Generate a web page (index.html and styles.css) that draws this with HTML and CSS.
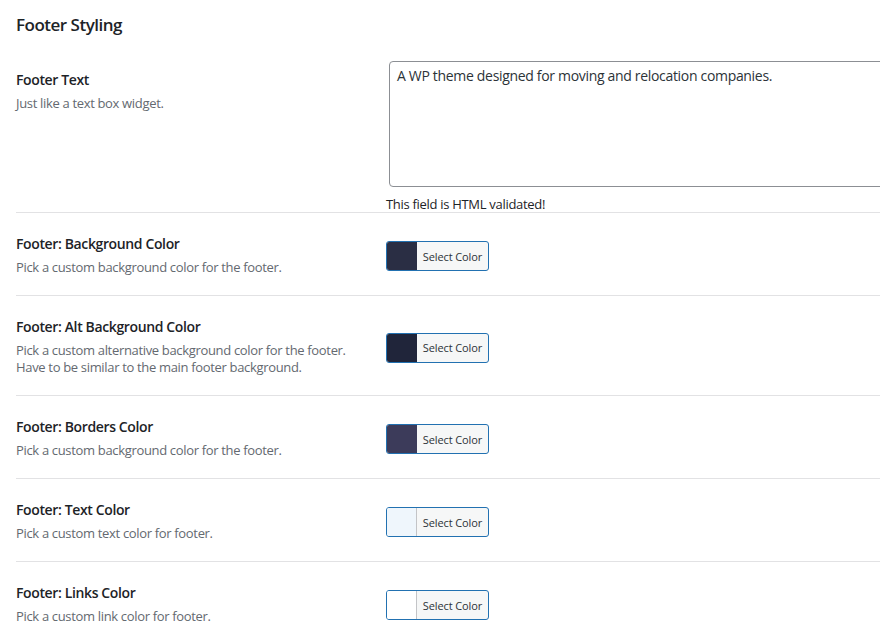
FILE: index.html
```html
<!DOCTYPE html>
<html lang="en">
<head>
<meta charset="utf-8">
<title>Footer Styling</title>
<link rel="stylesheet" href="styles.css">
</head>
<body>
<div class="wrap">
  <h2 class="section-title">Footer Styling</h2>

  <div class="row row-text">
    <div class="label">
      <div class="title">Footer Text</div>
      <div class="desc">Just like a text box widget.</div>
    </div>
    <div class="control control-text">
      <textarea class="textarea">A WP theme designed for moving and relocation companies.</textarea>
      <div class="note">This field is HTML validated!</div>
    </div>
  </div>

  <div class="row">
    <div class="label">
      <div class="title">Footer: Background Color</div>
      <div class="desc">Pick a custom background color for the footer.</div>
    </div>
    <div class="control">
      <button class="color-btn" type="button"><span class="swatch sw-bg"></span><span class="btn-text">Select Color</span></button>
    </div>
  </div>

  <div class="row">
    <div class="label">
      <div class="title">Footer: Alt Background Color</div>
      <div class="desc">Pick a custom alternative background color for the footer.<br>Have to be similar to the main footer background.</div>
    </div>
    <div class="control">
      <button class="color-btn" type="button"><span class="swatch sw-alt"></span><span class="btn-text">Select Color</span></button>
    </div>
  </div>

  <div class="row">
    <div class="label">
      <div class="title">Footer: Borders Color</div>
      <div class="desc">Pick a custom background color for the footer.</div>
    </div>
    <div class="control">
      <button class="color-btn" type="button"><span class="swatch sw-border"></span><span class="btn-text">Select Color</span></button>
    </div>
  </div>

  <div class="row">
    <div class="label">
      <div class="title">Footer: Text Color</div>
      <div class="desc">Pick a custom text color for footer.</div>
    </div>
    <div class="control">
      <button class="color-btn" type="button"><span class="swatch sw-text light"></span><span class="btn-text">Select Color</span></button>
    </div>
  </div>

  <div class="row">
    <div class="label">
      <div class="title">Footer: Links Color</div>
      <div class="desc">Pick a custom link color for footer.</div>
    </div>
    <div class="control">
      <button class="color-btn" type="button"><span class="swatch sw-link light"></span><span class="btn-text">Select Color</span></button>
    </div>
  </div>
</div>
</body>
</html>
```

FILE: styles.css
```css
html, body {
  margin: 0;
  padding: 0;
  background: #ffffff;
  overflow: hidden;
}

body {
  font-family: "Open Sans", "Noto Sans", "Liberation Sans", sans-serif;
  font-size: 13px;
  color: #1d2327;
}

.wrap {
  padding-left: 16px;
  width: 920px;
}

.section-title {
  margin: 13px 0 0 0;
  font-size: 17px;
  line-height: 24px;
  font-weight: 600;
  letter-spacing: -0.5px;
  color: #1d2327;
}

.row {
  display: flex;
  border-top: 1px solid #e2e2e4;
  padding: 22px 0 19px 0;
}

.row-text {
  border-top: none;
  padding: 24px 0 0 0;
}

.label {
  width: 370px;
  flex: none;
}

.row-text .label {
  padding-top: 10px;
}

.title {
  font-size: 14px;
  line-height: 18px;
  font-weight: 600;
  letter-spacing: -0.37px;
  color: #1d2327;
}

.desc {
  margin-top: 6px;
  font-size: 13px;
  line-height: 17px;
  letter-spacing: -0.33px;
  color: #646970;
}

.control {
  display: flex;
  align-items: center;
  padding-top: 1px;
}

.control-text {
  display: block;
  padding-top: 0;
}

.textarea {
  display: block;
  margin-left: 3px;
  width: 530px;
  height: 126px;
  box-sizing: border-box;
  border: 1px solid #8c8f94;
  border-radius: 4px;
  padding: 4px 7px;
  font-family: inherit;
  font-size: 14px;
  line-height: 20px;
  letter-spacing: -0.32px;
  color: #2c3338;
  resize: none;
}

.note {
  margin-top: 9px;
  font-size: 13px;
  line-height: 16px;
  letter-spacing: -0.3px;
  color: #1d2327;
}

.color-btn {
  display: flex;
  align-items: stretch;
  width: 103px;
  height: 30px;
  box-sizing: border-box;
  padding: 0;
  border: 1px solid #2271b1;
  border-radius: 3px;
  background: #f6f7f7;
  overflow: hidden;
  cursor: pointer;
  font-family: inherit;
}

.swatch {
  width: 30px;
  flex: none;
  box-sizing: border-box;
  border-right: 1px solid transparent;
}

.swatch.light {
  border-right-color: #c3c4c7;
}

.sw-bg { background: #2a2e44; }
.sw-alt { background: #20253a; }
.sw-border { background: #3c3b5a; }
.sw-text { background: #eff6fc; }
.sw-link { background: #ffffff; }

.btn-text {
  flex: 1;
  display: flex;
  align-items: center;
  justify-content: center;
  font-size: 11px;
  letter-spacing: -0.1px;
  color: #2c3338;
}
```
